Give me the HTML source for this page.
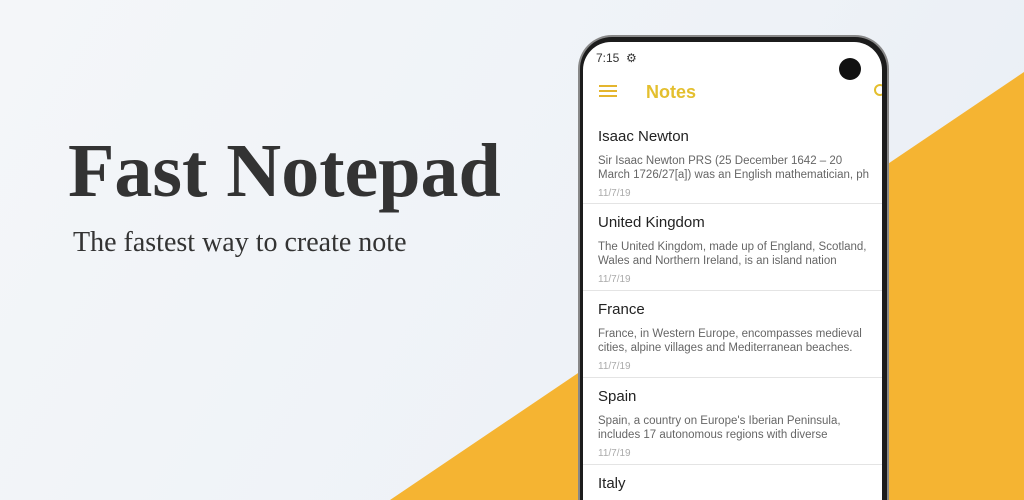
<!DOCTYPE html>
<html style="width:1024px;height:500px;overflow:hidden"><head><style>
*{margin:0;padding:0;box-sizing:border-box}
body{width:1024px;height:500px;overflow:hidden;position:relative;background:linear-gradient(120deg,#f4f6f9 0%,#eef2f7 60%,#e8edf4 100%);font-family:"Liberation Sans",sans-serif}
.tri{position:absolute;left:0;top:0}
h1{position:absolute;left:68px;top:128px;font-family:"Liberation Serif",serif;font-weight:bold;font-size:76px;color:#333;white-space:nowrap}
.sub{position:absolute;left:73px;top:227px;font-family:"Liberation Serif",serif;font-size:28px;color:#333;white-space:nowrap}
.phone{position:absolute;left:578px;top:35px;width:311px;height:465px;background:#1c1c1c;border-radius:34px 34px 0 0;border:2px solid #888;border-bottom:none}
.screen{position:absolute;left:583px;top:42px;width:299px;height:458px;background:#fff;border-radius:28px 28px 0 0;overflow:hidden}
.st{position:absolute;left:13px;top:9px;font-size:12px;color:#333}
.cam{position:absolute;left:256px;top:16px;width:22px;height:22px;border-radius:50%;background:#111}
.ham{position:absolute;left:16px;top:43px;width:18px;height:2px;background:#e4b52e;box-shadow:0 5px 0 #e4b52e,0 10px 0 #e4b52e}
.ttl{position:absolute;left:63px;top:40px;font-size:18px;color:#e4bf2e;font-weight:bold}
.item{position:absolute;left:0;width:299px;height:87px;border-bottom:1px solid #e4e4e4;padding:10px 0 0 15px}
.item b{display:block;font-weight:normal;font-size:15px;color:#222;margin-bottom:9px}
.item p{font-size:11.5px;color:#666;line-height:14px;white-space:nowrap}
.item i{display:block;font-style:normal;font-size:10px;color:#aaa;margin-top:6px}
</style></head><body>
<svg class="tri" width="1024" height="500"><polygon points="390,500 1024,72 1024,500" fill="#f5b432"/></svg>
<h1>Fast Notepad</h1>
<div class="sub">The fastest way to create note</div>
<div class="phone"></div>
<div class="screen">
<div class="st">7:15 &nbsp;⚙</div>
<div class="cam"></div>
<div class="ham"></div>
<div class="ttl">Notes</div>
<div style="position:absolute;left:291px;top:42px;width:12px;height:12px;border:2px solid #e4bf2e;border-radius:50%"></div>
<div class="item" style="top:76px;height:86px"><b>Isaac Newton</b><p>Sir Isaac Newton PRS (25 December 1642 – 20<br>March 1726/27[a]) was an English mathematician, ph</p><i>11/7/19</i></div>
<div class="item" style="top:162px"><b>United Kingdom</b><p>The United Kingdom, made up of England, Scotland,<br>Wales and Northern Ireland, is an island nation</p><i>11/7/19</i></div>
<div class="item" style="top:249px"><b>France</b><p>France, in Western Europe, encompasses medieval<br>cities, alpine villages and Mediterranean beaches.</p><i>11/7/19</i></div>
<div class="item" style="top:336px"><b>Spain</b><p>Spain, a country on Europe's Iberian Peninsula,<br>includes 17 autonomous regions with diverse</p><i>11/7/19</i></div>
<div class="item" style="top:423px;height:35px;border:none"><b>Italy</b></div>
</div>
</body></html>
